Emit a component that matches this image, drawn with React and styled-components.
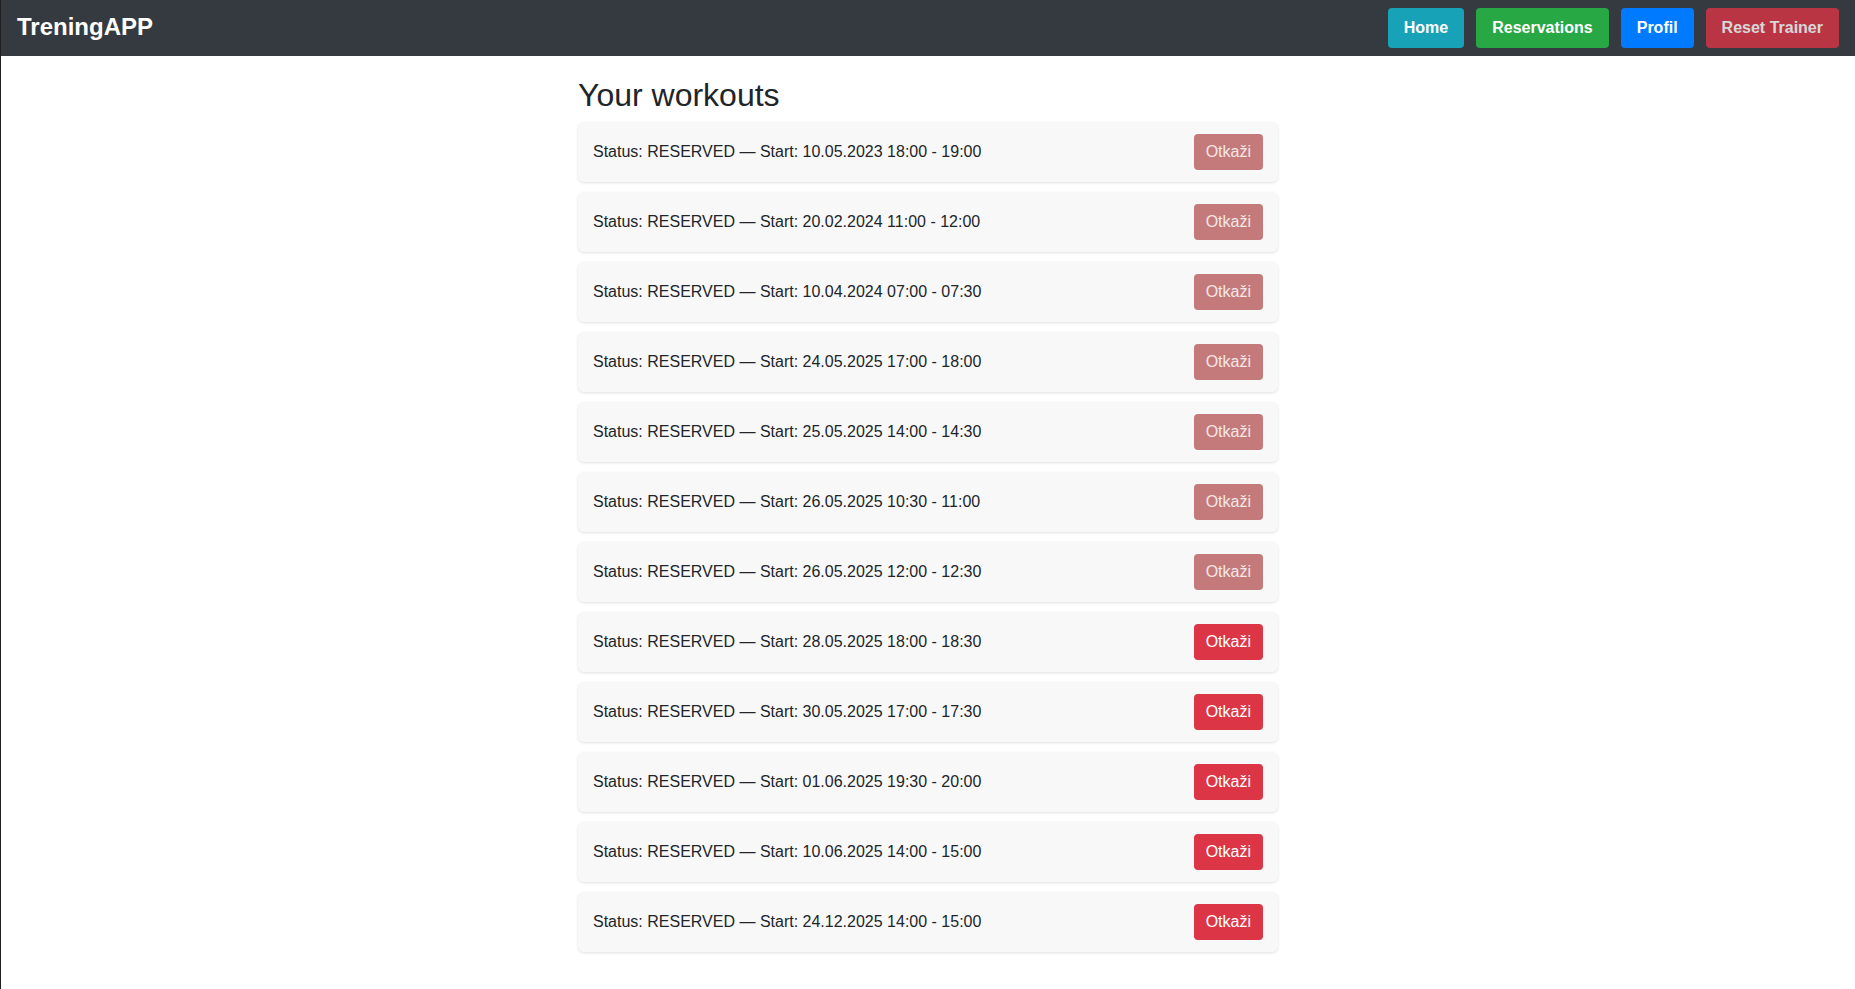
import React from 'react'
import styled, { createGlobalStyle } from 'styled-components'

const GlobalStyle = createGlobalStyle`
  * { box-sizing: border-box; }
  body {
    margin: 0;
    font-family: "Liberation Sans", Arial, sans-serif;
    color: #212529;
    background: #fff;
  }
`

const workouts = [
  { start: '10.05.2023 18:00 - 19:00', past: true },
  { start: '20.02.2024 11:00 - 12:00', past: true },
  { start: '10.04.2024 07:00 - 07:30', past: true },
  { start: '24.05.2025 17:00 - 18:00', past: true },
  { start: '25.05.2025 14:00 - 14:30', past: true },
  { start: '26.05.2025 10:30 - 11:00', past: true },
  { start: '26.05.2025 12:00 - 12:30', past: true },
  { start: '28.05.2025 18:00 - 18:30', past: false },
  { start: '30.05.2025 17:00 - 17:30', past: false },
  { start: '01.06.2025 19:30 - 20:00', past: false },
  { start: '10.06.2025 14:00 - 15:00', past: false },
  { start: '24.12.2025 14:00 - 15:00', past: false },
]

const navColors = {
  info: '#17a2b8',
  success: '#28a745',
  primary: '#007bff',
  danger: '#dc3545',
}

function App() {
  return (
    <Page>
      <GlobalStyle />
      <Navbar>
        <Brand>TreningAPP</Brand>
        <NavButtons>
          <NavButton variant="info">Home</NavButton>
          <NavButton variant="success">Reservations</NavButton>
          <NavButton variant="primary">Profil</NavButton>
          <NavButton variant="danger" muted>Reset Trainer</NavButton>
        </NavButtons>
      </Navbar>
      <Container>
        <Title>Your workouts</Title>
        <List>
          {workouts.map((w, i) => (
            <WorkoutCard key={i}>
              <span>Status: RESERVED — Start: {w.start}</span>
              <CancelButton disabled={w.past}>Otkaži</CancelButton>
            </WorkoutCard>
          ))}
        </List>
      </Container>
    </Page>
  )
}

export default App

const Page = styled.div`
  min-height: 100vh;
  border-left: 1px solid #1f1f22;
`

const Navbar = styled.nav`
  height: 56px;
  background: #343a40;
  display: flex;
  align-items: center;
  justify-content: space-between;
  padding: 0 16px;
`

const Brand = styled.div`
  color: #fff;
  font-size: 24px;
  font-weight: 700;
  line-height: 1;
  margin-top: -2px;
`

const NavButtons = styled.div`
  display: flex;
  gap: 12px;
`

const NavButton = styled.button`
  font-family: inherit;
  font-size: 16px;
  font-weight: 700;
  line-height: 24px;
  padding: 8px 16px;
  border: 0;
  border-radius: 4px;
  color: #fff;
  background: ${p => navColors[p.variant]};
  opacity: ${p => (p.muted ? 0.8 : 1)};
  cursor: pointer;
`

const Container = styled.main`
  max-width: 700px;
  margin: 0 auto;
  padding-top: 20px;
`

const Title = styled.h2`
  font-size: 32px;
  font-weight: 500;
  line-height: 38px;
  margin: 0 0 8px;
  color: #212529;
`

const List = styled.div`
  display: flex;
  flex-direction: column;
  gap: 10px;
`

const WorkoutCard = styled.div`
  display: flex;
  align-items: center;
  justify-content: space-between;
  padding: 12px 15px;
  background: #f8f8f8;
  border-radius: 6px;
  box-shadow: 0 1px 3px rgba(0, 0, 0, 0.12);
  font-size: 16px;
  color: #212529;
`

const CancelButton = styled.button`
  font-family: inherit;
  font-size: 16px;
  line-height: 24px;
  padding: 6px 12px;
  border: 0;
  border-radius: 4px;
  color: ${p => (p.disabled ? '#f3e6e6' : '#fff')};
  background: ${p => (p.disabled ? '#c47a7a' : '#dc3545')};
  cursor: ${p => (p.disabled ? 'default' : 'pointer')};
`
